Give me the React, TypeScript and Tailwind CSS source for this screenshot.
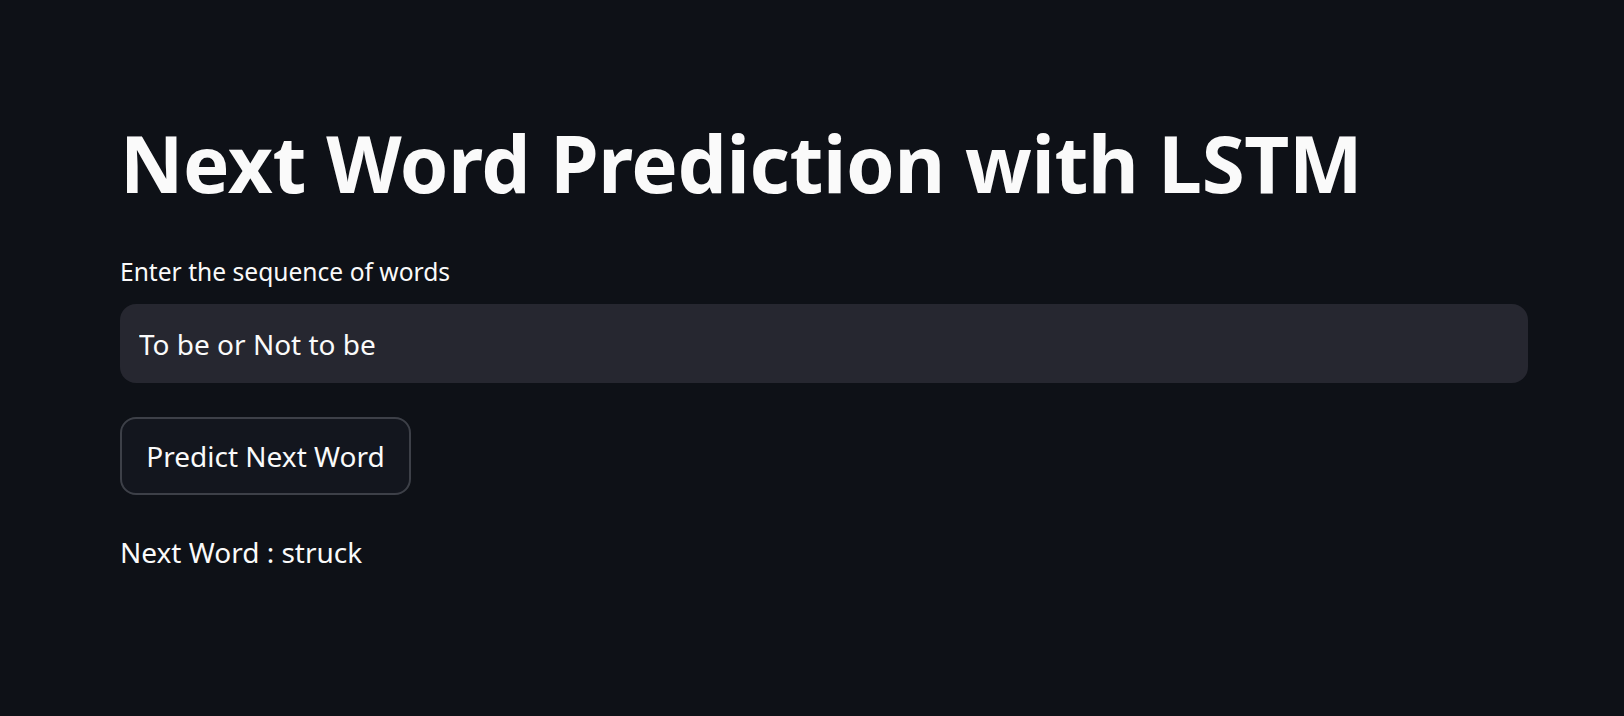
import { useState } from "react"

export default function App() {
  const [text, setText] = useState("To be or Not to be")
  const [next, setNext] = useState("struck")

  return (
    <div className="min-h-screen bg-[#0e1117] text-[#fafafa] font-['Noto_Sans',sans-serif]">
      <div className="ml-[120px] w-[1408px] flex flex-col">
        <h1 className="mt-[116px] h-[94px] leading-[94px] text-[78px] font-bold tracking-[-0.3px] whitespace-nowrap">
          Next Word Prediction with LSTM
        </h1>

        <label className="mt-[45px] h-[34px] leading-[34px] text-[24.6px]">Enter the sequence of words</label>
        <input
          value={text}
          onChange={(e) => setText(e.target.value)}
          className="mt-[15px] h-[79px] w-full rounded-[16px] bg-[#262730] px-[19px] text-[28px] text-[#fafafa] outline-none"
        />

        <button
          onClick={() => setNext("struck")}
          className="mt-[34px] h-[78px] w-[291px] rounded-[16px] border-2 border-[#3d4048] bg-[#13161e] text-[28px]"
        >
          Predict Next Word
        </button>

        <p className="mt-[38px] h-[38px] leading-[38px] text-[28px]">Next Word : {next}</p>
      </div>
    </div>
  )
}
